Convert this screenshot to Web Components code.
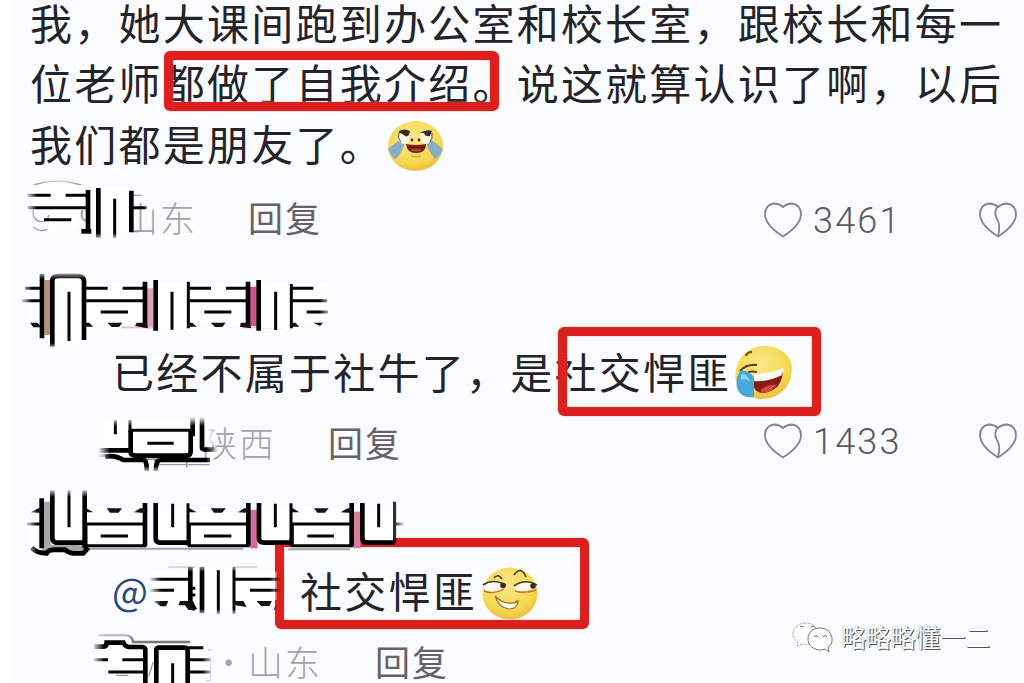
<!DOCTYPE html>
<html lang="zh-CN">
<head>
<meta charset="utf-8">
<title>评论</title>
<style>
    body {
        margin: 0;
        overflow: hidden;
        background: #fbfcff;
    }
</style>
</head>
<body>
<comment-page></comment-page>

<script>
const define = (name, html) => {
    customElements.define(name, class extends HTMLElement {
        constructor() {
            super();
            this.attachShadow({ mode: 'open' }).innerHTML = html;
        }
    });
};

const FACES = {
    tears: `
        <ellipse cx="27.5" cy="25" rx="27.5" ry="25" fill="url(#g)"/>
        <path d="M13 18Q6 23 0 28Q3 36 8 38Q15 30 17 21ZM42 18Q49 23 55 28Q52 36 47 38Q40 30 38 21Z" fill="#86afc5"/>
        <ellipse cx="16" cy="16" rx="5.5" ry="7" fill="#fff8e8"/>
        <ellipse cx="38" cy="16" rx="5.5" ry="7" fill="#fff8e8"/>
        <path d="M11 10Q16 7 22 10Q21 17 17 15Q14 12 11 12ZM32 12Q38 8 44 10L42 15Q37 16 36 12Z" fill="#3b2b25"/>
        <path d="M11 12Q9 17 13 21M44 12Q45 17 42 21" fill="none" stroke="#61534b"/>
        <circle cx="24" cy="19" r="1.4" fill="#4b2b12"/><circle cx="31" cy="19" r="1.4" fill="#4b2b12"/>
        <path d="M18 23Q28 25 38 23Q38 32 28 32Q19 32 18 23Z" fill="#761d14"/>
        <path d="M22 29Q28 26 34 29Q29 32 22 29Z" fill="#c4422a"/>
        <path d="M23 35Q28 37 33 35" fill="none" stroke="#bd982c"/>`,
    laugh: `
        <path d="M4 17Q11 1 30 0Q51 0 57 17Q60 31 51 43Q41 54 25 53Q7 50 2 35Q0 27 4 17Z" fill="url(#g)"/>
        <path d="M12 10Q13 6 18 6M6 25Q12 18 23 19M14 26Q18 25 23 26" fill="none" stroke="#664315" stroke-width="2"/>
        <path d="M20 29Q35 29 49 23Q49 44 30 47Q22 48 19 39Z" fill="#851c18"/>
        <path d="M20 28Q35 28 50 22L48 29Q35 36 20 35Z" fill="#fffdf3"/>
        <path d="M27 44Q33 38 43 39Q37 47 27 47Z" fill="#d4473c"/>
        <path d="M6 25Q15 23 20 32L20 51Q7 53 3 42Q1 33 6 25Z" fill="#45a9dc"/>
        <path d="M7 29Q13 26 16 36Q13 32 7 34Z" fill="#8ed5ed"/>`,
    smirk: `
        <ellipse cx="28" cy="26.500" rx="27.500" ry="26" fill="url(#g)"/>
        <path d="M1 19Q11 11 24 19Q18 26 4 24ZM32 20Q44 12 55 18Q52 25 34 24Z" fill="#fffaf0"/>
        <path d="M1 18Q11 11 24 18M32 19Q43 11 55 18M12 11Q16 6 20 12M32 8Q39 -2 44 10" fill="none" stroke="#51371e" stroke-width="1.600"/>
        <path d="M2 24Q12 28 22 22M33 24Q42 27 54 23" fill="none" stroke="#ce6b3a" stroke-width="1.400"/>
        <circle cx="21" cy="18.500" r="2.800" fill="#3e291f"/><circle cx="51" cy="19" r="2.800" fill="#3e291f"/>
        <path d="M13 29Q22 39 36 35Q35 42 27 42Q17 41 13 29Z" fill="#fffdf0" stroke="#a66e20" stroke-width="1.200"/>
        <path d="M33 35L37 33" stroke="#a66e20" stroke-width="1.200"/>`
};

class EmojiFace extends HTMLElement {
    connectedCallback() {
        this.attachShadow({ mode: 'open' }).innerHTML = `
            <style>
                :host { display: block; flex: none; width: 58px; height: 54px; white-space: normal; }
                svg { display: block; overflow: visible; }
            </style>
            <svg width="58" height="54" viewBox="0 0 58 54">
                <defs><radialGradient id="g" cx=".45" cy=".35" r=".7">
                    <stop offset="0" stop-color="#fbe88a"/><stop offset=".7" stop-color="#f5d850"/><stop offset="1" stop-color="#e9b63a"/>
                </radialGradient></defs>
                ${FACES[this.getAttribute('face')]}
            </svg>`;
    }
}
customElements.define('emoji-face', EmojiFace);

class HeartIcon extends HTMLElement {
    connectedCallback() {
        const crack = this.hasAttribute('broken') ? '<path d="M19 4Q14 10 18 17Q22 23 19 34"/>' : '';
        this.attachShadow({ mode: 'open' }).innerHTML = `
            <style>
                :host { display: block; flex: none; width: 38px; height: 36px; white-space: normal; }
                svg { display: block; }
            </style>
            <svg width="38" height="36" viewBox="0 0 38 36" fill="none" stroke="#858486" stroke-width="1.800" stroke-linejoin="round">
                <path d="M19 5Q15 1.500 10 1.500Q1.200 3 1 12Q1 23 19 34.500Q37 23 37 12Q36.800 3 28 1.500Q23 1.500 19 5Z"/>${crack}
            </svg>`;
    }
}
customElements.define('heart-icon', HeartIcon);

define('comment-text', `
    <style>
        :host {
            display: flex;
            align-items: center;
            height: 60.3px;
            font-size: 42px;
            letter-spacing: 2.24px;
            line-height: 60.3px;
            color: #242329;
            white-space: pre;
        }
    </style>
    <slot></slot>
`);

define('comment-meta', `
    <style>
        :host {
            display: flex;
            align-items: center;
            height: 50px;
            font-size: 35px;
            letter-spacing: 2px;
            line-height: 50px;
            color: #666268;
            white-space: nowrap;
        }
        .place {
            width: var(--place-end, 197px);
            text-align: right;
            color: #a4a3a8;
            font-weight: 300;
        }
        .reply { width: 100px; margin-left: var(--reply-gap, 51px); }
        .votes {
            display: flex;
            align-items: center;
            margin: 0 7px var(--votes-lift, -7px) auto;
        }
        .count {
            width: 166px;
            margin-left: 11px;
            padding-top: 2px;
            font: 300 36px/46px Roboto, sans-serif;
            letter-spacing: 2.2px;
            color: #5c595e;
        }
        :host([no-votes]) .votes { display: none; }
    </style>
    <span class="place"><slot name="place"></slot></span>
    <span class="reply">回复</span>
    <span class="votes">
        <heart-icon></heart-icon>
        <span class="count"><slot name="count"></slot></span>
        <heart-icon broken></heart-icon>
    </span>
`);

// hand-drawn frame around the highlighted words
define('mark-frame', `
    <style>
        :host {
            position: absolute;
            box-sizing: border-box;
            border: 9px solid #dc201d;
            border-radius: 6px;
            box-shadow: 0 0 2px #f7a7a7, inset 0 0 2px #f7a7a7;
        }
    </style>
`);

// Smudges over names and dates. w: white areas, b: thick strokes,
// m: medium strokes, t: grey traces, c: colour left from the avatar.
const PATCHES = {
    date1: {
        box: [25, 178, 130, 62], view: '75 24 390 186',
        c: '<path d="M94 48Q170 18 250 48" stroke="#777" stroke-width="5"/>',
        w: 'M90 45H270V120H90ZM120 115H235V180H150L130 145ZM270 55H390V192H270ZM152 36H197V70H152Z',
        b: 'M264 60V184M295 54V204M394 62V187M244 184H274',
        m: 'M82 76H152M197 76H262M82 113H262M132 149H214M344 86V204M394 113H440',
        t: 'M100 120Q95 150 122 155Q145 155 146 135M100 170Q115 188 142 178M394 76H425M394 185H415'
    },
    name1: {
        box: [20, 270, 312, 80], view: '60 30 936 240',
        c: '<path d="M144 60V225" stroke="#b98e71" stroke-width="20"/><path d="M449 85V205" stroke="#dca2bd" stroke-width="20"/><path d="M760 80V198" stroke="#cd5685" stroke-width="20"/><path d="M365 202H470M725 202H850" stroke="#edbed1" stroke-width="5"/>',
        w: 'M80 72H118V192H80ZM162 52H247V248H162ZM260 72H430V194H260ZM475 72H562V205H475ZM568 72H740V194H568ZM785 72H872V205H785ZM878 72H980V194H878Z',
        b: 'M126 42V235M157 260V62Q157 48 175 48H235Q250 48 252 62V240M435 65V202M467 60V212M744 65V202M776 60V212',
        m: 'M75 85H120M65 122H120M207 95V243M256 85H323M368 85H430M256 122H430M302 156H384M516 95V209M565 65V205M565 85H633M678 85H740M565 122H740M613 156H694M827 95V210M874 72V205M874 85H940M874 122H982M920 156H984',
        s: 'M90 188H112L126 202H100ZM252 188H267L280 200H252ZM322 188H367L357 201H335ZM410 188H440L444 205L405 198ZM562 188H577L590 200H562ZM632 188H677L667 201H645ZM722 188H748L754 205L720 200ZM872 188H886L898 200H872ZM940 188H970L960 198Z'
    },
    date2: {
        box: [98, 417, 120, 56], view: '54 36 360 168',
        c: '<path d="M55 153Q100 145 135 165H350" stroke="#777" stroke-width="9"/>',
        w: 'M68 48H330V145H68ZM350 55H365V135H350ZM205 164H222V202H205ZM375 50H400V125H375Z',
        b: 'M58 136H150M152 76V142Q152 152 170 152H320Q332 152 332 138V78M338 36V94M366 36V128Q366 134 380 134H414M75 155Q105 149 130 165H188Q202 165 200 198M228 198Q226 165 244 165H390',
        m: 'M106 46V88M150 44V76H332M202 115H281',
        t: 'M222 179H390M320 170V188'
    },
    name2: {
        box: [25, 488, 380, 75], view: '45 9 1140 225',
        c: '<path d="M110 50V192H225" stroke="#aaa6a9" stroke-width="26"/><path d="M732 75V190" stroke="#d66b9d" stroke-width="22"/><path d="M1042 80V190" stroke="#d77ba5" stroke-width="20"/><path d="M235 191H700M835 193H1020" stroke="#a4a0a4" stroke-width="6"/>',
        w: 'M60 70H90V185H60ZM136 25H218V167H136ZM225 70H400V182H225ZM444 68H530V167H444ZM536 70H712V182H536ZM754 68H838V167H754ZM846 70H1020V182H846ZM1064 68H1150V167H1064ZM122 203H168V235H122Z',
        b: 'M95 40V190M127 16V158Q127 173 144 173H222M224 16V190M405 54V182M437 54V160Q437 173 450 173H532M715 54V182M747 54V160Q747 173 762 173H842M1025 54V182M1057 54V160Q1057 173 1072 173H1155M65 188Q80 205 110 205Q115 194 135 194H165Q175 204 190 205H220L235 188',
        m: 'M177 16V127M488 56V127M796 56V127M1106 56V127M1154 50V175M50 117H92M534 55V182M843 55V182M225 117H405V182H228V117M538 117H715V182H538V117M847 117H1025V182H847V117M272 153H354M582 153H664M892 153H972M1155 117H1180',
        s: 'M62 82L85 70H94V84ZM226 68L250 82H226ZM290 70H336L326 83H300ZM372 82L390 70H405V84ZM536 68L560 82H536ZM602 70H648L636 83H612ZM684 82L702 70H716V84ZM846 68L868 82H846ZM912 70H956L945 83H922ZM992 82L1012 70H1026V84Z'
    },
    mention: {
        box: [149, 563, 133, 53], view: '207 39 399 159',
        t: 'M265 51H345M465 51H530',
        w: 'M220 65H325V150H300V185H285L270 150H220ZM340 60H360V185H340ZM375 55H460V190H375ZM470 65H590V150H550L530 175H500L488 150H470Z',
        b: 'M331 50V155L345 180M366 50V190',
        m: 'M210 88H330M210 121H282M415 60V192M462 50V192M462 88H602M510 121H602M330 115H346M330 135H346',
        s: 'M220 153H265L258 169H242ZM300 153H340L338 180H325L315 166H295ZM460 153H490L500 171L462 165ZM530 153H576L568 168H543ZM240 180L255 172M580 180L588 165V180Z'
    },
    date3: {
        box: [92, 631, 122, 52], view: '36 243 366 156', bottom: '#000',
        c: '<path d="M55 255H135Q155 255 160 276H330" stroke="#777" stroke-width="8"/>',
        w: 'M84 288H127V315H185V399H120V348H60V310H84ZM206 292H222V399H206ZM238 300H320V399H238ZM330 300H365V399H330Z',
        b: 'M42 290H68Q80 290 80 278H130Q136 291 150 291H186Q198 291 196 304V399M229 399V300Q229 293 238 293H314Q323 293 323 304V399',
        m: 'M42 329H84M127 329H190M85 366H190M278 340V399M325 329H392M325 366H392M325 293H370',
        t: 'M108 376H145M206 380L220 335M385 300H395M392 320V392H380'
    }
};

class SmudgePatch extends HTMLElement {
    connectedCallback() {
        const p = PATCHES[this.getAttribute('kind')];
        const [x, y, w, h] = p.box;
        this.attachShadow({ mode: 'open' }).innerHTML = `
            <style>
                :host {
                    position: absolute;
                    left: ${x}px;
                    top: ${y}px;
                    width: ${w}px;
                    height: ${h}px;
                    -webkit-mask: linear-gradient(90deg, transparent, #000 12px calc(100% - 12px), transparent), linear-gradient(transparent, #000 9px calc(100% - 7px), ${p.bottom || 'transparent'});
                    -webkit-mask-composite: source-in;
                }
                svg { display: block; }
            </style>
            <svg width="${w}" height="${h}" viewBox="${p.view}" fill="none">
                ${p.c || ''}
                <path d="${p.w}" fill="#fff"/>
                <path d="${p.t || ''}" stroke="#999" stroke-width="4"/>
                <path d="${p.m}" stroke="#050505" stroke-width="9"/>
                <path d="${p.b}" stroke="#000" stroke-width="14"/>
                <path d="${p.s || ''}" fill="#111"/>
            </svg>`;
    }
}
customElements.define('smudge-patch', SmudgePatch);

define('channel-mark', `
    <style>
        :host {
            position: absolute;
            right: 34px;
            bottom: 28px;
            display: flex;
            align-items: center;
            gap: 7px;
            height: 38px;
            font-size: 24.8px;
            line-height: 38px;
            color: #fff;
            text-shadow: 1px 1px 0 #555, 0 0 1px #777;
            white-space: nowrap;
        }
        svg { display: block; margin-top: 3px; }
    </style>
    <svg width="42" height="32" viewBox="0 0 42 32" fill="#fff" stroke="#777" stroke-width="1">
        <path d="M14 1C6 1 1 6 1 12Q1 17 6 20L5 24L11 22Q18 23 22 19Q29 9 21 3Q18 1 14 1Z" stroke="#aaa" stroke-dasharray="3 1"/>
        <path d="M28 6C20 6 16 11 16 17C16 24 22 28 29 28L33 27L37 30L36 25Q41 22 40 16Q38 6 28 6Z"/>
        <path d="M8 5Q10 3 12 5M19 5Q21 3 23 5M22 15Q24 12 26 15M31 15Q33 12 35 15" fill="none" stroke="#666"/>
    </svg>
    <slot></slot>
`);

define('comment-page', `
    <style>
        :host {
            display: block;
            position: relative;
            width: 1024px;
            height: 683px;
            overflow: hidden;
            background: linear-gradient(90deg, #fff 8px, #fbfcff 14px);
            font-family: "Noto Sans CJK SC", sans-serif;
        }
        article { display: flex; flex-direction: column; }
        .first { margin-top: -8px; padding-left: 30px; }
        .nested { padding-left: 112px; }
        .first comment-meta { margin: 19px 0 0 -30px; }
        .nested comment-meta { margin: 16px 0 0 -112px; }
        .second { padding-top: 99px; }
        .third { padding-top: 93px; }
        .second comment-meta { --place-end: 276px; --reply-gap: 52px; --votes-lift: 3px; }
        .third comment-meta { --place-end: 322px; --reply-gap: 53px; }
        .at { width: 188px; font-size: 38px; letter-spacing: 0; color: #294a78; }
        emoji-face { margin: 4px 0 0 3px; }
        .first emoji-face { margin: 10px 0 0 4px; }
        .third emoji-face { margin: 7px 0 0 5px; }
    </style>

    <article class="first">
        <comment-text>我，她大课间跑到办公室和校长室，跟校长和每一</comment-text>
        <comment-text>位老师都做了自我介绍。说这就算认识了啊，以后</comment-text>
        <comment-text>我们都是朋友了。<emoji-face face="tears"></emoji-face></comment-text>
        <comment-meta><span slot="place">9-  山东</span><span slot="count">3461</span></comment-meta>
    </article>

    <article class="nested second">
        <comment-text>已经不属于社牛了，是社交悍匪<emoji-face face="laugh"></emoji-face></comment-text>
        <comment-meta><span slot="place">陕西</span><span slot="count">1433</span></comment-meta>
    </article>

    <article class="nested third">
        <comment-text><span class="at">@</span>社交悍匪<emoji-face face="smirk"></emoji-face></comment-text>
        <comment-meta no-votes><span slot="place">前 ·山东</span></comment-meta>
    </article>

    <mark-frame style="left:164px;top:51px;width:335px;height:60px"></mark-frame>
    <mark-frame style="left:558px;top:327px;width:263px;height:89px"></mark-frame>
    <mark-frame style="left:275px;top:538px;width:314px;height:91px"></mark-frame>

    <smudge-patch kind="date1"></smudge-patch>
    <smudge-patch kind="name1"></smudge-patch>
    <smudge-patch kind="date2"></smudge-patch>
    <smudge-patch kind="name2"></smudge-patch>
    <smudge-patch kind="mention"></smudge-patch>
    <smudge-patch kind="date3"></smudge-patch>

    <channel-mark>略略略懂一二</channel-mark>
`);
</script>
</body>
</html>
